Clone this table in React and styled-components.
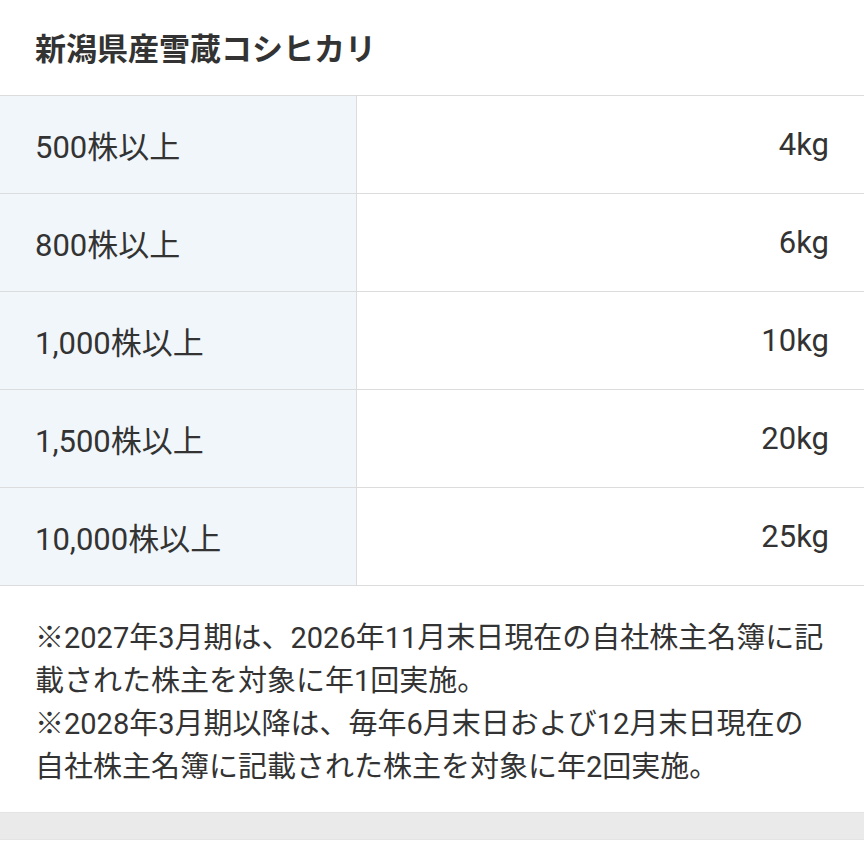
import styled, { createGlobalStyle } from "styled-components";

const GlobalStyle = createGlobalStyle`
  html, body {
    margin: 0;
    padding: 0;
    background: #fff;
  }
  body {
    font-family: "Roboto", "Noto Sans CJK JP", sans-serif;
    color: #333;
  }
`;

const rows = [
  { shares: "500株以上", amount: "4kg" },
  { shares: "800株以上", amount: "6kg" },
  { shares: "1,000株以上", amount: "10kg" },
  { shares: "1,500株以上", amount: "20kg" },
  { shares: "10,000株以上", amount: "25kg" },
];

const Page = styled.main`
  width: 864px;
  display: flex;
  flex-direction: column;
`;

const Title = styled.h2`
  margin: 0;
  height: 96px;
  padding: 0 35px 2px;
  box-sizing: border-box;
  display: flex;
  align-items: center;
  font-size: 31px;
  font-weight: 700;
  color: #333;
  border-bottom: 1px solid #dcdcdc;
`;

const Table = styled.div`
  display: grid;
  grid-template-columns: 357px 1fr;
`;

const Cell = styled.div`
  height: 97px;
  display: flex;
  align-items: center;
  padding: 0 35px;
  font-size: 31px;
  color: #333;
  border-bottom: 1px solid #dcdcdc;
  justify-content: ${(p) => (p.$head ? "flex-start" : "flex-end")};
  background: ${(p) => (p.$head ? "#f1f6fa" : "#fff")};
  border-right: ${(p) => (p.$head ? "1px solid #dcdcdc" : "none")};
`;

const Notes = styled.div`
  padding: 31px 35px 23px;
  font-size: 29px;
  line-height: 43px;
  color: #333;

  p {
    margin: 0;
  }
`;

const Footer = styled.div`
  height: 26px;
  background: #eaeaea;
  border-top: 1px solid #e4e4e4;
  border-bottom: 1px solid #e4e4e4;
`;

export default function App() {
  return (
    <>
      <GlobalStyle />
      <Page>
        <Title>新潟県産雪蔵コシヒカリ</Title>
        <Table>
          {rows.map((r) => [
            <Cell key={r.shares} $head>
              {r.shares}
            </Cell>,
            <Cell key={r.amount}>{r.amount}</Cell>,
          ])}
        </Table>
        <Notes>
          <p>※2027年3月期は、2026年11月末日現在の自社株主名簿に記載された株主を対象に年1回実施。</p>
          <p>※2028年3月期以降は、毎年6月末日および12月末日現在の自社株主名簿に記載された株主を対象に年2回実施。</p>
        </Notes>
        <Footer />
      </Page>
    </>
  );
}
